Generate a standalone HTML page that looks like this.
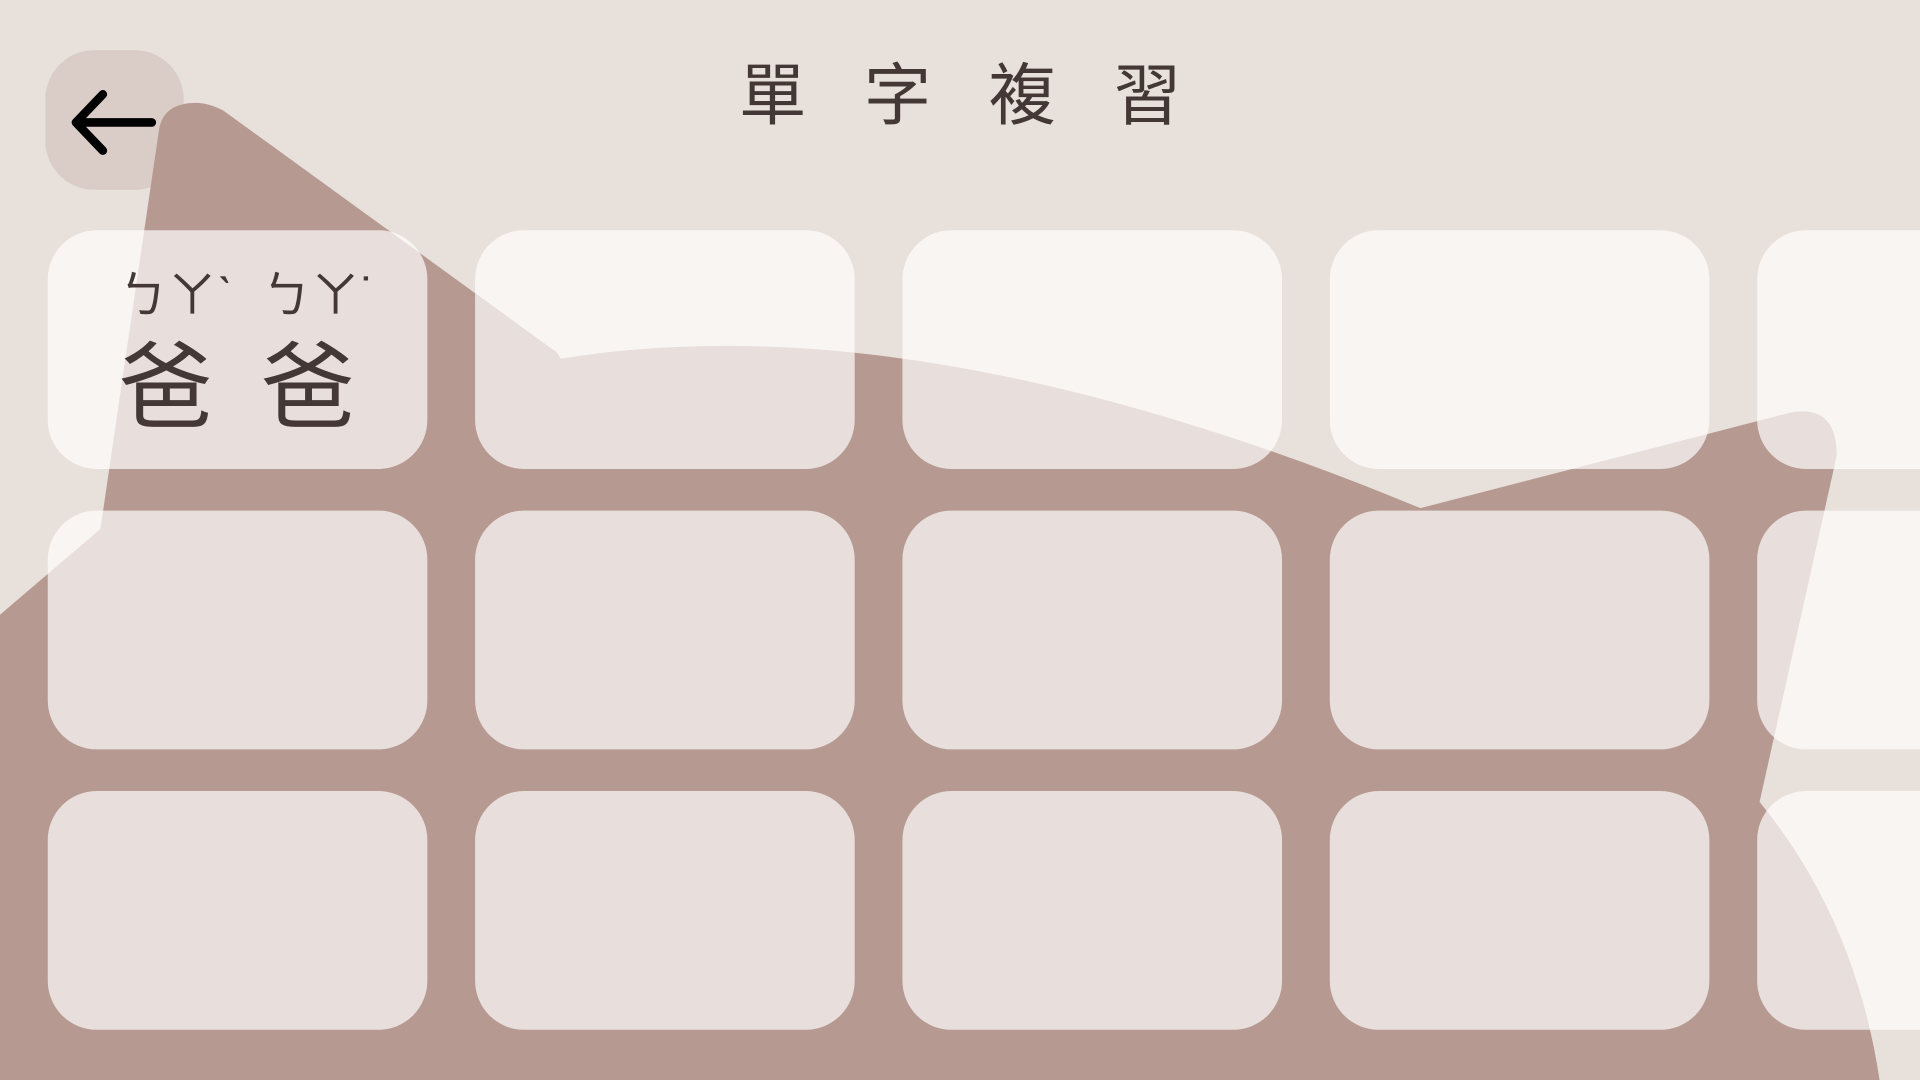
<!DOCTYPE html>
<html><head><meta charset="utf-8"><style>
html,body{margin:0;padding:0;width:1920px;height:1080px;overflow:hidden;background:#e8e0da}
#s{position:absolute;left:0;top:0;width:1568px;height:882px;transform:scale(1.22449);transform-origin:0 0;font-family:"Liberation Sans","Noto Sans CJK TC",sans-serif;color:#433836}
svg{position:absolute;left:0;top:0}
.btn{position:absolute;left:37px;top:41px;width:113px;height:114px;border-radius:40px;background:rgba(182,154,146,0.28)}
.title{position:absolute;left:0;width:1568px;top:43px;text-align:center;font-size:55px;letter-spacing:47px;text-indent:47px;line-height:70px}
.card{position:absolute;width:310px;height:195px;border-radius:40px;background:rgba(255,255,255,0.68)}
.bpm{position:absolute;top:29px;font-size:40px;white-space:nowrap;line-height:50px}
.zh{position:absolute;left:58px;top:84px;font-size:77px;letter-spacing:39px;line-height:90px;white-space:nowrap}
</style></head><body><div id="s">
<svg width="1568" height="882" viewBox="0 0 1568 882">
<path d="M130,105 Q134,84 160,84 Q170,84 182,90 L455,288 L458,293 Q750,245 1160,415 L1462,337 Q1500,330 1500,372 L1437,655 Q1515,750 1535,882 L0,882 L0,502 L82,432 Z" fill="#b69a92"/>
</svg>
<div class="btn"></div>
<svg width="1568" height="882" viewBox="0 0 1568 882"><path d="M84,77 L62,100 L84,123 M62,100 L124,100" stroke="#000" stroke-width="7" fill="none" stroke-linecap="round" stroke-linejoin="round"/></svg>
<div class="title">單字複習</div>
<div class="card" style="left:39px;top:188px"><div class="bpm" style="left:58px">ㄅㄚˋ</div><div class="bpm" style="left:175px">ㄅㄚ˙</div><div class="zh">爸爸</div></div>
<div class="card" style="left:388px;top:188px"></div>
<div class="card" style="left:737px;top:188px"></div>
<div class="card" style="left:1086px;top:188px"></div>
<div class="card" style="left:1435px;top:188px"></div>
<div class="card" style="left:39px;top:417px"></div>
<div class="card" style="left:388px;top:417px"></div>
<div class="card" style="left:737px;top:417px"></div>
<div class="card" style="left:1086px;top:417px"></div>
<div class="card" style="left:1435px;top:417px"></div>
<div class="card" style="left:39px;top:646px"></div>
<div class="card" style="left:388px;top:646px"></div>
<div class="card" style="left:737px;top:646px"></div>
<div class="card" style="left:1086px;top:646px"></div>
<div class="card" style="left:1435px;top:646px"></div>
</div></body></html>
